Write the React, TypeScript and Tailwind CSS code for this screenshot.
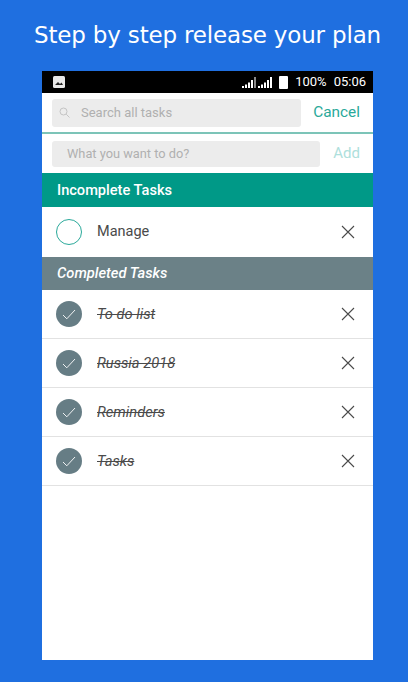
import React from "react";

const roboto = { fontFamily: "Roboto, sans-serif" };

const done = ["To do list", "Russia 2018", "Reminders", "Tasks"];

const CloseIcon = () => (
  <svg width="14" height="14" viewBox="0 0 14 14" className="text-[#4a4a4a]">
    <path d="M1 1L13 13M13 1L1 13" stroke="currentColor" strokeWidth="1.1" fill="none" />
  </svg>
);

const Signal = ({ last }: { last: string }) => (
  <svg width="14" height="11" viewBox="0 0 14 11">
    <rect x="0" y="9" width="2" height="2" fill="#fff" />
    <rect x="3" y="7.5" width="2" height="3.5" fill="#fff" />
    <rect x="6" y="5.5" width="2" height="5.5" fill="#fff" />
    <rect x="9" y="3" width="2" height="8" fill="#fff" />
    <rect x="12" y="0" width="2" height="11" fill={last} />
  </svg>
);

const TaskRow = ({ title }: { title: string }) => (
  <div className="h-[49px] flex items-center pl-[14px] pr-[18px] border-b border-[#e2e2e2]">
    <div className="w-[26px] h-[26px] rounded-full bg-[#667d85] flex items-center justify-center">
      <svg width="14" height="11" viewBox="0 0 14 11">
        <path d="M1 6L4.8 9.8L13 1" stroke="#fff" strokeWidth="0.9" fill="none" />
      </svg>
    </div>
    <span className="ml-[15px] flex-1 text-[14.7px] italic line-through text-[#4a4a4a]">{title}</span>
    <CloseIcon />
  </div>
);

export default function App() {
  return (
    <div className="w-[408px] h-[682px] bg-[#1f6fe0] flex flex-col overflow-hidden" style={roboto}>
      <h1
        className="h-[71px] pt-[18px] pl-[34px] text-[23px] leading-[34px] font-normal text-white whitespace-nowrap"
        style={{ fontFamily: "'DejaVu Sans', sans-serif", letterSpacing: "-0.17px" }}
      >
        Step by step release your plan
      </h1>

      <div className="ml-[42px] w-[331px] h-[589px] bg-white flex flex-col">
        <div className="h-[22px] bg-black flex items-center pl-[11px] pr-[7px] text-white text-[13px]">
          <svg width="12" height="12" viewBox="0 0 12 12">
            <rect x="0" y="0" width="12" height="12" rx="1.5" fill="#e8e8e8" />
            <path d="M2 9L5 6L7 8L8.5 6.5L10 9Z" fill="#222" />
          </svg>
          <div className="ml-auto flex items-center gap-[2px]">
            <Signal last="#888" />
            <Signal last="#fff" />
          </div>
          <div className="ml-[7px] w-[9px] h-[13px] bg-white rounded-[1px]" />
          <span className="ml-[7px]">100%</span>
          <span className="ml-[7px]">05:06</span>
        </div>

        <div className="h-[41px] flex items-center pl-[10px] pr-[13px] border-b-2 border-[#7cc4b8]">
          <div className="w-[249px] h-[28px] bg-[#ececec] rounded-[3px] flex items-center pl-[7px] text-[13px] text-[#b0b0b0]">
            <svg width="11" height="11" viewBox="0 0 11 11">
              <circle cx="4.5" cy="4.5" r="3.5" stroke="#c4c4c4" strokeWidth="1" fill="none" />
              <path d="M7.2 7.2L10.5 10.5" stroke="#c4c4c4" strokeWidth="1" />
            </svg>
            <span className="ml-[11px]">Search all tasks</span>
          </div>
          <span className="ml-auto text-[15.4px] text-[#2aa99a]">Cancel</span>
        </div>

        <div className="h-[39px] flex items-center pl-[10px] pr-[13px]">
          <div className="w-[268px] h-[26px] bg-[#ececec] rounded-[3px] flex items-center pl-[15px] text-[12.8px] text-[#b0b0b0]">
            What you want to do?
          </div>
          <span className="ml-auto text-[15px] text-[#aee0dc]">Add</span>
        </div>

        <div className="h-[34px] bg-[#009987] flex items-center pl-[15px] pt-[1px] text-[14.6px] font-medium text-white">
          Incomplete Tasks
        </div>

        <div className="h-[50px] flex items-center pl-[14px] pr-[18px]">
          <div className="w-[26px] h-[26px] rounded-full border border-[#2aa99a]" />
          <span className="ml-[15px] flex-1 text-[14.5px] text-[#4a4a4a]">Manage</span>
          <CloseIcon />
        </div>

        <div className="h-[33px] bg-[#6b8187] flex items-center pl-[15px] text-[14.7px] font-medium italic text-white">
          Completed Tasks
        </div>

        {done.map((t) => (
          <TaskRow key={t} title={t} />
        ))}
      </div>
    </div>
  );
}
